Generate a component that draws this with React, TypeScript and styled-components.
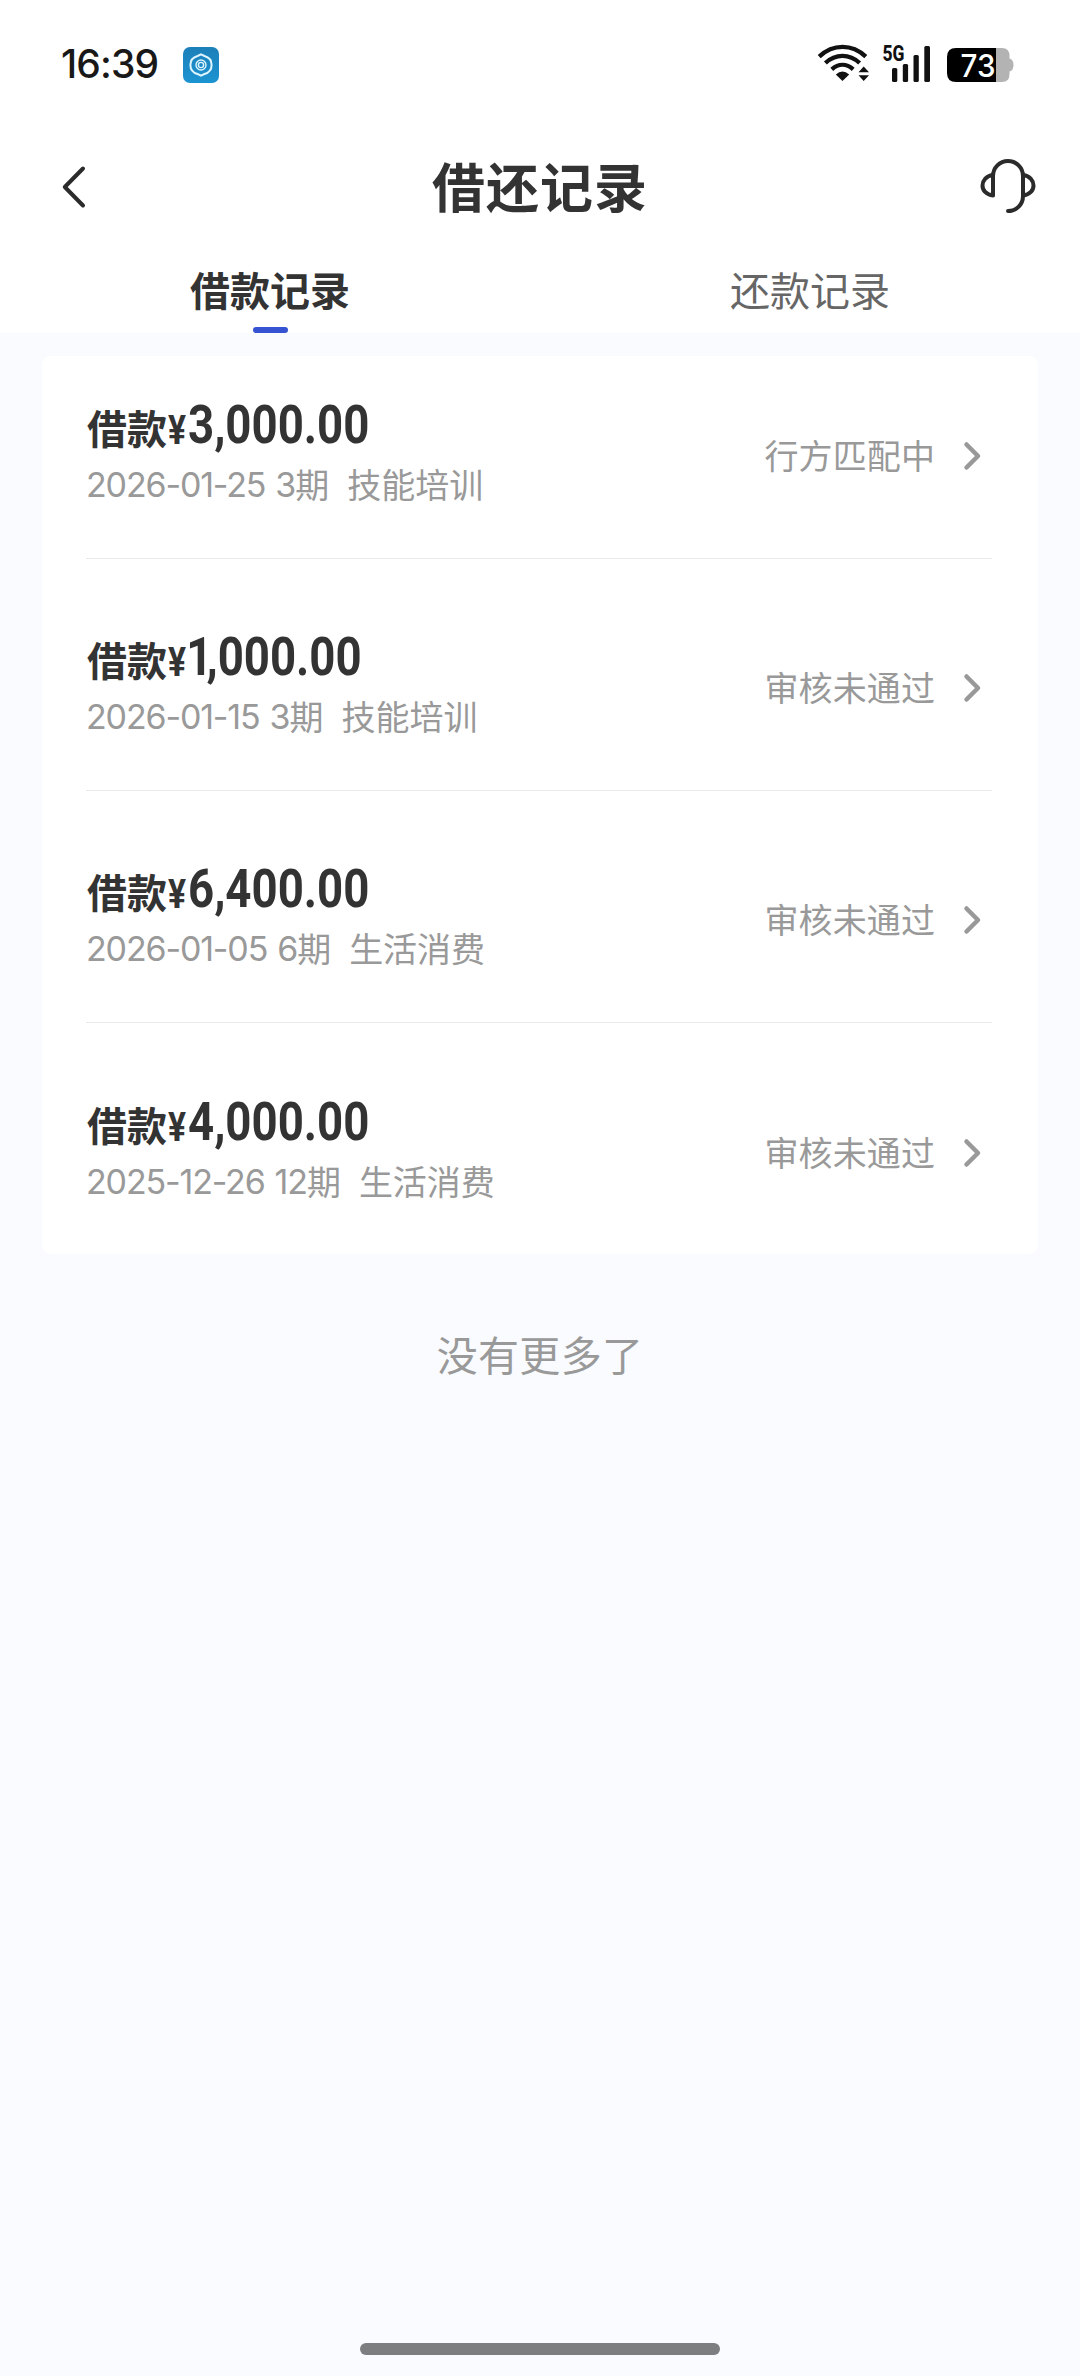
import React from "react";
import styled, { createGlobalStyle } from "styled-components";

const cjk = `"Noto Sans CJK SC", sans-serif`;

const GlobalStyle = createGlobalStyle`
  html, body { margin: 0; padding: 0; background: #fafbff; }
  * { box-sizing: border-box; }
  svg { display: block; flex: none; overflow: visible; }
`;

const Page = styled.div`
  width: 1080px;
  height: 2376px;
  display: flex;
  flex-direction: column;
  background: #fafbff;
  font-family: ${cjk};
  color: #333;
  overflow: hidden;
`;

const Header = styled.header`
  height: 333px;
  background: #fff;
  display: flex;
  flex-direction: column;
`;

const StatusBar = styled.div`
  height: 130px;
  display: flex;
  align-items: center;
  padding: 0 66px 0 61px;
`;

const Clock = styled.div`
  width: 122px;
  padding-bottom: 3px;
  font: 500 39px/48px Inter, sans-serif;
  letter-spacing: -0.9px;
  color: #181818;
  white-space: nowrap;
`;

const StatusIcons = styled.div`
  margin-left: auto;
  display: flex;
  align-items: center;
`;

const Radio = styled.div`
  display: flex;
  gap: 13px;
  margin: 0 16px 4px 0;
`;

const NavBar = styled.div`
  height: 113px;
  display: grid;
  grid-template-columns: 120px 1fr 120px;
  align-items: center;
`;

const NavButton = styled.button<{ $end?: boolean }>`
  border: 0;
  padding: ${(p) => (p.$end ? "0 44px 1px 0" : "0 0 0 60px")};
  background: none;
  display: flex;
  justify-content: ${(p) => (p.$end ? "flex-end" : "flex-start")};
`;

const Title = styled.h1`
  margin: 0;
  padding-bottom: 3px;
  font-size: 53px;
  line-height: 76px;
  letter-spacing: 1px;
  font-weight: 700;
  text-align: center;
`;

const Tabs = styled.nav`
  flex: 1;
  display: grid;
  grid-template-columns: 1fr 1fr;
`;

const Tab = styled.div<{ $active?: boolean }>`
  display: flex;
  flex-direction: column;
  align-items: center;
  justify-content: space-between;
  padding-top: 17px;
  font-size: 40px;
  line-height: 58px;
  font-weight: ${(p) => (p.$active ? 700 : 400)};
  color: ${(p) => (p.$active ? "#333" : "#666")};
`;

const TabMark = styled.span`
  width: 35px;
  height: 6px;
  border-radius: 3px;
  background: #3654d1;
`;

const Card = styled.section`
  margin: 23px 42px 0;
  height: 898px;
  border-radius: 9px;
  background: #fff;
  padding: 0 46px 0 44px;
`;

const Row = styled.article`
  height: 232px;
  display: flex;
  align-items: flex-end;
  border-bottom: 1px solid #e9e9ea;

  &:first-child { height: 203px; }
  &:last-child { border-bottom: 0; }
`;

const RowBody = styled.div`
  width: 100%;
  height: 232px;
  flex: none;
  display: flex;
  justify-content: space-between;
  align-items: flex-start;
  padding-top: 72px;
`;

const Info = styled.div`
  display: flex;
  flex-direction: column;
`;

const AmountLine = styled.div`
  height: 62px;
  padding-left: 1px;
  display: flex;
  align-items: flex-start;
  font-weight: 700;
  white-space: nowrap;
`;

const AmountLabel = styled.span`
  width: 81px;
  font-size: 40px;
  line-height: 59px;
`;

const Yen = styled.span`
  width: 20px;
  font: 700 41px/64px Roboto, sans-serif;
  transform: scaleX(0.82);
  transform-origin: left;
`;

const Digits = styled.span`
  font: 700 53px/55px Roboto, sans-serif;
  transform: scaleX(0.86);
  transform-origin: left;
`;

const Narrow = styled.span`
  margin-left: -2px;
  margin-right: -7px;
`;

const Meta = styled.div`
  display: flex;
  height: 48px;
  font-size: 34px;
  line-height: 48px;
  color: #999;
  white-space: nowrap;
`;

const Numeric = styled.span<{ $gap?: number }>`
  font-family: Inter, sans-serif;
  font-weight: 400;
  line-height: 50px;
  letter-spacing: -1.15px;
  margin-right: ${(p) => p.$gap ?? 0}px;
`;

const Purpose = styled.span`
  margin-left: 18px;
`;

const Status = styled.div`
  display: flex;
  align-items: center;
  gap: 28px;
  margin: 33px 11px 0 0;
  height: 50px;
  font-size: 34px;
  line-height: 50px;
  letter-spacing: 0.1px;
  color: #999;
`;

const StatusText = styled.span`
  padding-bottom: 2px;
`;

const EndNote = styled.p`
  margin: 69px 0 0;
  text-align: center;
  font-size: 41px;
  letter-spacing: 0.3px;
  line-height: 60px;
  color: #999;
`;

const HomeBar = styled.div`
  width: 360px;
  height: 12px;
  margin: auto auto 21px;
  border-radius: 6px;
  background: #7d7e80;
`;

const AppIcon = () => (
  <svg width="36" height="36" viewBox="0 0 36 36">
    <defs>
      <linearGradient id="app" x1="0" y1="0" x2="0" y2="1">
        <stop offset="0" stopColor="#1c7fb8" />
        <stop offset="1" stopColor="#1c94d2" />
      </linearGradient>
    </defs>
    <rect width="36" height="36" rx="7" fill="url(#app)" />
    <path d="M18 7.400l3.400 1.600c4.500 1.200 7.200 4.500 7.200 9s-2.700 7.800-7.200 9L18 28.600l-3.400-1.600c-4.500-1.200-7.200-4.500-7.200-9s2.700-7.800 7.200-9z" fill="none" stroke="#def5ff" strokeWidth="2" />
    <circle cx="18" cy="18" r="5" fill="none" stroke="#def5ff" strokeWidth="1.400" />
    <circle cx="18" cy="18" r="2.600" fill="none" stroke="#def5ff" strokeWidth="1.400" />
  </svg>
);

const WifiIcon = () => (
  <svg width="52" height="38" viewBox="0 0 52 38">
    <g fill="none" stroke="#111" strokeWidth="4.300">
      <path d="M2.200 12.600C16-.4 35-.4 48.800 12.600" />
      <path d="M8.400 19C18.500 9.500 32.500 9.500 42.600 19" />
      <path d="M14.800 25.300C21.500 19.300 29.500 19.300 36.200 25.300" />
    </g>
    <path d="M18.800 30.600q6.700-6 13.400 0L25.500 37z" fill="#111" />
    <path d="M41.500 28.300L46.700 22.500 52 28.300zM41.500 31.200H52L46.700 37z" fill="#111" />
  </svg>
);

const SignalIcon = () => (
  <svg width="49" height="38" viewBox="0 0 49 38">
    <text x="0.500" y="17" fontFamily="Roboto, sans-serif" fontWeight="800" fontSize="21.500" textLength="22" lengthAdjust="spacingAndGlyphs" fill="#111">5G</text>
    <g fill="#111">
      <rect x="10" y="24" width="5.300" height="14" rx="1.500" />
      <rect x="20.800" y="20" width="5.300" height="18" rx="1.500" />
      <rect x="31.500" y="11" width="5.300" height="27" rx="1.500" />
      <rect x="42.300" y="2" width="5.700" height="36" rx="1.500" />
    </g>
  </svg>
);

const BatteryIcon = () => (
  <svg width="67" height="34" viewBox="0 0 67 34">
    <path d="M49 0h6q7.500 0 7.500 8v2.500q4 1 4 6.500t-4 6.500V26q0 8-7.500 8h-6z" fill="#b3b3b3" />
    <path d="M9 0h40v34H9q-9 0-9-9V9q0-9 9-9z" fill="#000" />
    <text x="13.500" y="28.500" fontFamily="Inter, sans-serif" fontWeight="500" fontSize="31" textLength="35" lengthAdjust="spacingAndGlyphs" fill="#fff">73</text>
  </svg>
);

const BackIcon = () => (
  <svg width="28" height="46" viewBox="0 0 28 46">
    <path d="M23 4.500L4.800 23 23 41.500" fill="none" stroke="#2b2b2b" strokeWidth="4" strokeLinecap="round" strokeLinejoin="round" />
  </svg>
);

const HeadsetIcon = () => (
  <svg width="56" height="56" viewBox="0 0 56 56">
    <g fill="none" stroke="#2b2b2b" strokeWidth="4" strokeLinecap="round" strokeLinejoin="round">
      <path d="M13 37V18a15 15 0 0 1 30 0V38c0 9-7 15-15 15" />
      <path d="M13 17C-1 19-1 36 13 37.500" />
      <path d="M43 17C57 19 57 36 43 37.500" />
    </g>
  </svg>
);

const ChevronIcon = () => (
  <svg width="18" height="32" viewBox="0 0 18 32">
    <path d="M3.500 4.500L15 16 3.500 27.500" fill="none" stroke="#999" strokeWidth="4.500" strokeLinecap="round" strokeLinejoin="round" />
  </svg>
);

interface LoanRecord {
  amount: string;
  date: string;
  term: string;
  purpose: string;
  status: string;
}

const records: LoanRecord[] = [
  { amount: "3,000.00", date: "2026-01-25", term: "3", purpose: "技能培训", status: "行方匹配中" },
  { amount: "1,000.00", date: "2026-01-15", term: "3", purpose: "技能培训", status: "审核未通过" },
  { amount: "6,400.00", date: "2026-01-05", term: "6", purpose: "生活消费", status: "审核未通过" },
  { amount: "4,000.00", date: "2025-12-26", term: "12", purpose: "生活消费", status: "审核未通过" },
];

const Amount = ({ value }: { value: string }) => (
  <Digits>
    {value.startsWith("1") ? (
      <>
        <Narrow>1</Narrow>
        {value.slice(1)}
      </>
    ) : (
      value
    )}
  </Digits>
);

export default function App() {
  return (
    <Page>
      <GlobalStyle />
      <Header>
        <StatusBar>
          <Clock>16:39</Clock>
          <AppIcon />
          <StatusIcons>
            <Radio>
              <WifiIcon />
              <SignalIcon />
            </Radio>
            <BatteryIcon />
          </StatusIcons>
        </StatusBar>
        <NavBar>
          <NavButton aria-label="返回">
            <BackIcon />
          </NavButton>
          <Title>借还记录</Title>
          <NavButton $end aria-label="客服">
            <HeadsetIcon />
          </NavButton>
        </NavBar>
        <Tabs>
          <Tab $active>
            借款记录
            <TabMark />
          </Tab>
          <Tab>还款记录</Tab>
        </Tabs>
      </Header>
      <Card>
        {records.map((r) => (
          <Row key={r.date}>
            <RowBody>
              <Info>
                <AmountLine>
                  <AmountLabel>借款</AmountLabel>
                  <Yen>¥</Yen>
                  <Amount value={r.amount} />
                </AmountLine>
                <Meta>
                  <Numeric $gap={10}>{r.date}</Numeric>
                  <Numeric>{r.term}</Numeric>期
                  <Purpose>{r.purpose}</Purpose>
                </Meta>
              </Info>
              <Status>
                <StatusText>{r.status}</StatusText>
                <ChevronIcon />
              </Status>
            </RowBody>
          </Row>
        ))}
      </Card>
      <EndNote>没有更多了</EndNote>
      <HomeBar />
    </Page>
  );
}
